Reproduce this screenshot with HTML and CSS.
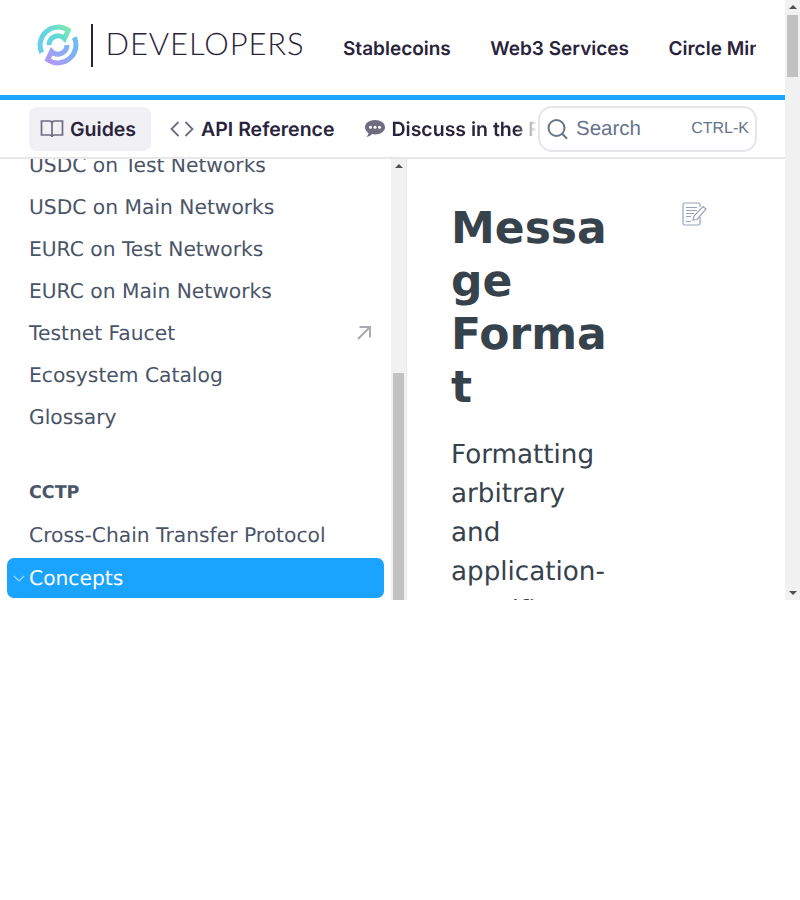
FILE: index.html
```html
<!DOCTYPE html>
<html lang="en">
<head>
<meta charset="utf-8">
<title>Message Format</title>
<link rel="stylesheet" href="styles.css">
</head>
<body>
<div class="viewport">
  <div class="page">
    <header class="topbar">
      <a class="logo">
        <svg class="logo-mark" width="42" height="42" viewBox="0 0 42 42" fill="none" stroke-width="5">
          <defs>
            <linearGradient id="lg" x1="36" y1="10" x2="12" y2="38" gradientUnits="userSpaceOnUse">
              <stop offset="0" stop-color="#66bff2"/>
              <stop offset=".5" stop-color="#86aef5"/>
              <stop offset="1" stop-color="#b197f5"/>
            </linearGradient>
            <linearGradient id="lg2" x1="5" y1="30" x2="33" y2="5" gradientUnits="userSpaceOnUse">
              <stop offset="0" stop-color="#68cdf0"/>
              <stop offset=".6" stop-color="#62d8d8"/>
              <stop offset="1" stop-color="#7fe8b0"/>
            </linearGradient>
          </defs>
          <path d="M4.700 28.600A18 18 0 0 1 31.300 6.300L27.400 14.600A9 9 0 0 0 12 21" stroke="url(#lg2)"/>
          <path d="M37.300 13.400A18 18 0 0 1 10.700 35.700L14.600 27.400A9 9 0 0 0 30 21" stroke="url(#lg)"/>
        </svg>
        <span class="logo-rule"></span>
        <span class="logo-text">DEVELOPERS</span>
      </a>
      <nav class="topnav">
        <a>Stablecoins</a>
        <a>Web3 Services</a>
        <a>Circle Mint</a>
      </nav>
    </header>
    <div class="subbar">
      <nav class="tabs">
        <a class="tab tab-active">
          <svg width="24" height="22" viewBox="0 0 24 22" fill="none" stroke="#6f6c80" stroke-width="1.700"><path d="M1.500 3h8c1.500 0 2.500 1 2.500 2.500V19c0-1.200-1-2-2.500-2h-8zM22.500 3h-8C13 3 12 4 12 5.500V19c0-1.200 1-2 2.500-2h8z"/></svg>
          Guides
        </a>
        <a class="tab tab-code">
          <svg width="24" height="18" viewBox="0 0 24 18" fill="none" stroke="#6f6c80" stroke-width="1.800"><path d="M8.500 2L1.500 9l7 7M15.500 2l7 7-7 7"/></svg>
          API Reference
        </a>
        <a class="tab tab-fade">
          <svg width="20" height="18" viewBox="0 0 20 18"><path fill="#6f6c80" d="M10 0c5.500 0 10 3 10 7.200s-4.500 7.200-10 7.200c-1 0-1.900-.1-2.800-.3C5.800 15.600 3.500 16.800 1.500 17c1-1 1.800-2.500 2-4C1.500 11.700 0 9.600 0 7.200 0 3 4.500 0 10 0z"/><circle cx="5.500" cy="7.300" r="1.500" fill="#fff"/><circle cx="10" cy="7.300" r="1.500" fill="#fff"/><circle cx="14.500" cy="7.300" r="1.500" fill="#fff"/></svg>
          <span>Discuss in the Forum</span>
        </a>
      </nav>
      <div class="search">
        <svg width="22" height="22" viewBox="0 0 22 22" fill="none" stroke="#64748b" stroke-width="2"><circle cx="9.500" cy="10" r="8"/><path d="M15.500 16l4.500 4.700"/></svg>
        <span class="search-label">Search</span>
        <span class="search-key">CTRL-K</span>
      </div>
    </div>
    <main class="body">
      <aside class="sidebar">
        <div class="side-scroll">
          <ul class="side-list">
            <li class="side-item">USDC on Test Networks</li>
            <li class="side-item">USDC on Main Networks</li>
            <li class="side-item">EURC on Test Networks</li>
            <li class="side-item">EURC on Main Networks</li>
            <li class="side-item side-ext">Testnet Faucet
              <svg width="14" height="14" viewBox="0 0 14 14" fill="none" stroke="#aaa9b2" stroke-width="1.900"><path d="M1 13L13 1M2.500 1H13v10.500"/></svg>
            </li>
            <li class="side-item">Ecosystem Catalog</li>
            <li class="side-item">Glossary</li>
            <li class="side-title">CCTP</li>
            <li class="side-item">Cross-Chain Transfer Protocol</li>
            <li class="side-item side-active">
              <svg class="side-chev" width="12" height="7" viewBox="0 0 12 7" fill="none" stroke="#a5d9ff" stroke-width="1.200"><path d="M1 1l5 5 5-5"/></svg>
              Concepts
            </li>
          </ul>
        </div>
        <div class="scrollbar side-bar">
          <span class="arrow-up"></span>
          <span class="thumb side-thumb"></span>
        </div>
      </aside>
      <article class="content">
        <div class="doc">
          <h1 class="doc-title">Message Format</h1>
          <p class="doc-lead">Formatting arbitrary and application-specific messages</p>
        </div>
        <svg class="doc-edit" width="25" height="24" viewBox="0 0 25 24" fill="none" stroke="#98a3ba" stroke-width="1.200"><path d="M18 5V2.500C18 1.600 17.400 1 16.500 1h-14C1.600 1 1 1.600 1 2.500v19c0 .9.600 1.500 1.500 1.500h14c.9 0 1.500-.6 1.500-1.500V15"/><path d="M4 5.500h11M4 8.500h11M4 11.500h8M4 14.500h5M4 19.500h5"/><path d="M11 18l1-4L21 4.500l3 2.500-9 10.500z"/></svg>
      </article>
    </main>
  </div>
  <div class="scrollbar page-bar">
    <span class="arrow-up"></span>
    <span class="thumb page-thumb"></span>
    <span class="arrow-down"></span>
  </div>
</div>
</body>
</html>
```

FILE: styles.css
```css
* { box-sizing: border-box; }
html, body { margin: 0; padding: 0; background: #fff; }
body { font-family: "DejaVu Sans", sans-serif; text-rendering: geometricPrecision; color: #374151; }
a { color: inherit; text-decoration: none; }
ul { list-style: none; margin: 0; padding: 0; }

.viewport { display: flex; width: 800px; height: 600px; overflow: hidden; }
.page { display: flex; flex-direction: column; width: 785px; height: 600px; overflow: hidden; }

.scrollbar { display: flex; flex-direction: column; align-items: center; flex: none; width: 15px; background: #f1f1f1; }
.page-bar { height: 600px; }
.thumb { display: block; background: #c1c1c1; }
.arrow-up { flex: none; width: 0; height: 0; margin-top: 5px; border-left: 4px solid transparent; border-right: 4px solid transparent; border-bottom: 4px solid #505050; }
.arrow-down { flex: none; width: 0; height: 0; margin-top: auto; margin-bottom: 5px; border-left: 4px solid transparent; border-right: 4px solid transparent; border-top: 4px solid #505050; }
.page-thumb { width: 11px; height: 62px; margin-top: 6px; }
.side-thumb { width: 11px; flex: none; height: 400px; margin-top: 205px; }

.topbar { flex: none; display: flex; align-items: center; height: 100px; border-bottom: 5px solid #1aa3ff; padding: 0 29px 0 36.500px; }
.logo { display: flex; align-items: center; flex: none; width: 306.500px; margin-top: -4px; }
.logo-mark { flex: none; margin-top: -1px; }
.logo-rule { flex: none; width: 2px; height: 43px; margin: 0 13px 0 12px; background: #29233b; }
.logo-text { font-family: Lato, sans-serif; font-weight: 300; font-size: 31px; line-height: 36px; letter-spacing: .9px; color: #29233b; margin-top: -6px; }
.topnav { display: flex; gap: 39.500px; flex: 1; min-width: 0; overflow: hidden; white-space: nowrap; font-family: Inter, sans-serif; font-weight: 600; font-size: 19px; line-height: 24px; color: #29233b; margin-top: 3px; }

.subbar { flex: none; display: flex; align-items: center; height: 59px; padding: 0 28px 0 29px; border-bottom: 2px solid #e8e8e8; }
.tabs { flex: none; display: flex; align-items: center; width: 509px; overflow: hidden; white-space: nowrap; font-family: Inter, sans-serif; font-weight: 600; font-size: 19.500px; color: #29233b; }
.tab { flex: none; display: flex; align-items: center; gap: 6px; height: 44px; padding: 0 15px 0 11px; margin-right: 8px; border-radius: 8px; }
.tab-active { background: #f0f0f5; }
.tab-code { gap: 7px; }
.tab-fade { gap: 6px; padding-right: 0; margin-left: -3px; }
.tab-fade span { display: block; width: 146px; overflow: hidden; -webkit-mask-image: linear-gradient(to right, #000 86%, transparent 100%); mask-image: linear-gradient(to right, #000 86%, transparent 100%); }

.search { flex: none; display: flex; align-items: center; width: 219px; height: 46px; padding: 0 6px 0 7px; border: 2px solid #e6e6ea; border-radius: 14px; font-family: "Liberation Sans", sans-serif; color: #64748b; background: #fff; }
.search-label { margin-left: 7px; font-size: 20.500px; }
.search-key { margin-left: auto; font-size: 16px; }

.body { flex: 1; min-height: 0; display: flex; overflow: hidden; }
.sidebar { flex: none; display: flex; width: 407px; border-right: 1px solid #e8e8e8; overflow: hidden; }
.side-scroll { flex: none; width: 391px; overflow: hidden; }
.side-list { margin-top: -15px; padding: 0 7px; }
.side-item { position: relative; display: flex; align-items: center; justify-content: space-between; height: 42px; padding: 0 13px 0 22px; font-size: 20.250px; color: #4a5568; white-space: nowrap; }
.side-title { display: flex; align-items: center; height: 34px; margin-top: 38px; margin-bottom: 4px; padding-left: 22px; font-size: 17.500px; font-weight: 700; color: #4a5568; }
.side-active { height: 40px; margin-top: 2px; background: #1aa3ff; color: #fff; border-radius: 7px; justify-content: flex-start; }
.side-chev { position: absolute; left: 6px; top: 17px; }
.side-bar { height: 460px; overflow: hidden; }

.content { flex: 1; min-width: 0; display: flex; align-items: flex-start; padding: 43px 0 0 44px; overflow: hidden; }
.doc { flex: none; width: 160px; }
.doc-title { margin: 0; font-size: 44px; line-height: 53px; font-weight: 700; overflow-wrap: anywhere; color: #36424c; }
.doc-lead { margin: 22px 0 0; font-size: 26.200px; line-height: 39px; color: #36424c; overflow-wrap: break-word; }
.doc-edit { flex: none; margin: 0 0 0 71px; }
```
